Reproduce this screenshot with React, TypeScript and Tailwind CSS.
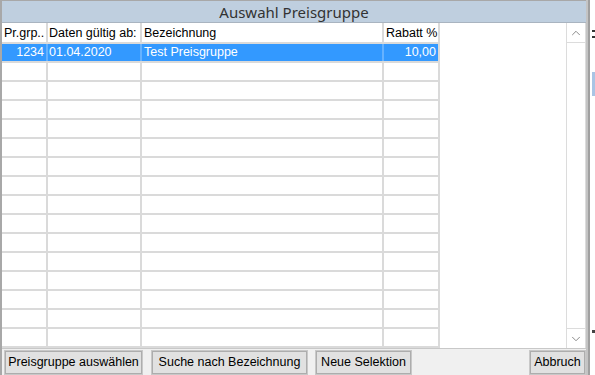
import { ChevronUp, ChevronDown } from "lucide-react"

type Row = {
  id: string
  grp: string
  date: string
  name: string
  discount: string
}

const rows: Row[] = [
  { id: 'r1', grp: '1234', date: '01.04.2020', name: 'Test Preisgruppe', discount: '10,00' },
  ...Array.from({ length: 15 }, (_, i) => ({ id: `e${i}`, grp: '', date: '', name: '', discount: '' })),
]

function Cells({ row, selected }: { row: Row; selected: boolean }) {
  const line = selected ? 'border-[#66b2ff]' : 'border-[#dadada]'
  return (
    <div className={`flex h-[19px] w-[438px] border-b-2 border-[#dadada] ${selected ? 'bg-[#3399ff] text-white' : 'text-black'}`}>
      <div className={`w-[46px] border-r-2 ${line} pr-[2px] text-right leading-[17px]`}>{row.grp}</div>
      <div className={`w-[94px] border-r-2 ${line} pl-[1px] leading-[17px]`}>{row.date}</div>
      <div className={`w-[242px] border-r-2 ${line} pl-[2px] leading-[17px]`}>{row.name}</div>
      <div className="w-[56px] border-r-2 border-[#dadada] pr-[2px] text-right leading-[17px]">{row.discount}</div>
    </div>
  )
}

function Button({ label, className }: { label: string; className: string }) {
  return (
    <button className={`h-[23px] border border-[#adadad] bg-[#e1e1e1] text-[12.5px] leading-none text-black shadow-[0_0_0_1px_#c8c8c8] ${className}`}>
      {label}
    </button>
  )
}

export default function App() {
  return (
    <div className="flex h-[375px] w-[595px] overflow-hidden bg-white font-['Liberation_Sans',Arial,sans-serif] text-[12.5px]">
      <div className="flex w-[586px] flex-col border-l-2 border-t border-[#a8a8a8]">
        <div className="flex h-[22px] items-center justify-center border-b border-[#a9b4c0] bg-[#bfcfdf] pt-[1px] font-['Noto_Sans',sans-serif] text-[15px] text-[#333]">
          Auswahl Preisgruppe
        </div>

        <div className="flex h-[325px]">
          <div className="relative flex-1 bg-white">
            <div className="flex h-[21px] w-[438px] border-b-2 border-[#dadada]">
              <div className="w-[46px] border-r-2 border-[#dadada] pl-[2px] leading-[20px]">Pr.grp..</div>
              <div className="w-[94px] border-r-2 border-[#dadada] pl-[1px] leading-[20px]">Daten gültig ab:</div>
              <div className="w-[242px] border-r-2 border-[#dadada] pl-[2px] leading-[20px]">Bezeichnung</div>
              <div className="w-[56px] border-r-2 border-[#dadada] pl-[2px] leading-[20px]">Rabatt %</div>
            </div>
            {rows.map((row, i) => (
              <Cells key={row.id} row={row} selected={i === 0} />
            ))}
          </div>

          <div className="flex w-[20px] flex-col border-x border-[#dcdcdc] bg-white">
            <div className="flex h-[20px] items-center justify-center border-b border-[#dcdcdc]">
              <ChevronUp size={14} strokeWidth={1.5} className="text-[#7a7a7a]" />
            </div>
            <div className="flex-1" />
            <div className="flex h-[20px] items-center justify-center border-t border-[#dcdcdc]">
              <ChevronDown size={14} strokeWidth={1.5} className="text-[#7a7a7a]" />
            </div>
          </div>
        </div>

        <div className="flex h-[27px] items-center border-t border-[#c8c8c8] bg-[#f0f0f0] pl-[3px] pr-[1px]">
          <Button label="Preisgruppe auswählen" className="w-[137px]" />
          <Button label="Suche nach Bezeichnung" className="ml-[10px] w-[155px]" />
          <Button label="Neue Selektion" className="ml-[9px] w-[95px]" />
          <div className="flex-1" />
          <Button label="Abbruch" className="w-[55px]" />
        </div>
      </div>

      <div className="flex w-[9px]">
        <div className="w-[2px] bg-[#c4c4c4]" />
        <div className="w-[2px] bg-[#a0a0a0]" />
        <div className="relative flex-1 bg-white">
          <div className="absolute left-[2px] top-[30px] h-[2px] w-[3px] bg-[#333]" />
          <div className="absolute left-[2px] top-[36px] h-[2px] w-[3px] bg-[#333]" />
          <div className="absolute left-[2px] top-[72px] h-[24px] w-[3px] bg-[#a9c4e4]" />
          <div className="absolute left-[2px] top-[330px] h-[3px] w-[3px] bg-[#444]" />
        </div>
      </div>
    </div>
  )
}
